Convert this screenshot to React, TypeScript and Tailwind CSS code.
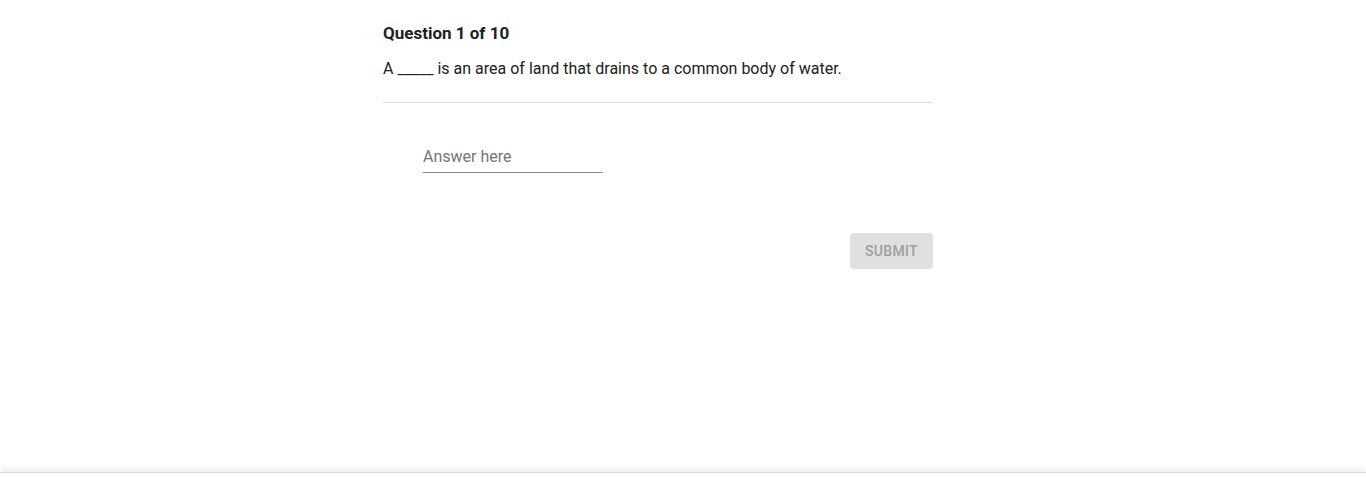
export default function App() {
  return (
    <div className="flex h-[479px] flex-col bg-white font-['Roboto',sans-serif] text-[#212121]">
      <main className="flex-1">
        <div className="mx-auto w-[600px] pt-[22px]">
          <div className="w-[550px]">
            <h2 className="text-[17px] font-bold leading-[22px]">Question 1 of 10</h2>
            <p className="mt-[14px] text-[16px] leading-[22px]">
              A _____ is an area of land that drains to a common body of water.
            </p>
            <hr className="mt-[22px] border-t border-[#e0e0e0]" />
            <div className="pl-[40px] pt-[42px]">
              <input
                type="text"
                placeholder="Answer here"
                className="w-[180px] border-b border-[#8a8a8a] pb-[4px] text-[16px] leading-[22px] outline-none placeholder:text-[#757575]"
              />
            </div>
            <div className="flex justify-end pt-[60px]">
              <button
                disabled
                className="h-[36px] w-[83px] rounded-[4px] bg-[#e0e0e0] text-[14px] font-medium uppercase tracking-[0.3px] text-[#9e9e9e]"
              >
                Submit
              </button>
            </div>
          </div>
        </div>
      </main>
      <footer className="h-[7px] border-t border-[#d8d8d8] bg-white shadow-[0_-3px_6px_rgba(0,0,0,0.08)]" />
    </div>
  );
}
